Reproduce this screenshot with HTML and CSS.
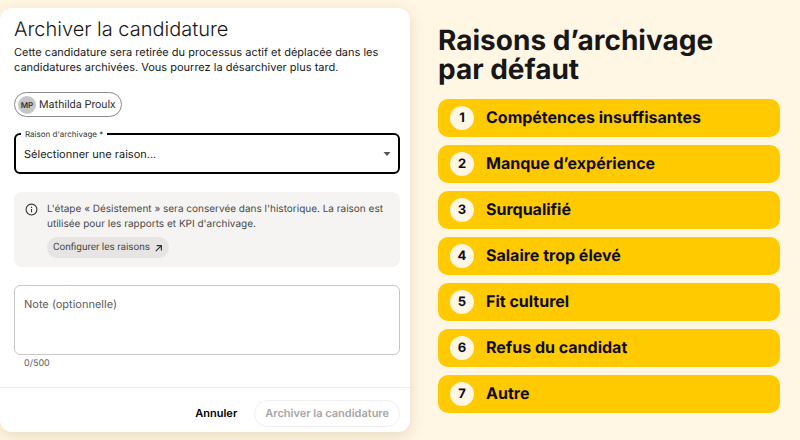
FILE: index.html
```html
<!DOCTYPE html>
<html lang="fr">
<head>
  <meta charset="utf-8">
  <title>Archiver la candidature</title>
  <link rel="stylesheet" href="styles.css">
</head>

<body>
  <main class="page">
    <form class="dialog">
      <div class="dialog-body">
        <h1 class="dialog-title">Archiver la candidature</h1>
        <p class="dialog-text">Cette candidature sera retirée du processus actif et déplacée dans les candidatures archivées. Vous pourrez la désarchiver plus tard.</p>

        <div class="chip">
          <span class="avatar">MP</span>
          <span>Mathilda Proulx</span>
        </div>

        <fieldset class="select-field">
          <legend><label for="reason">Raison d'archivage *</label></legend>
          <div class="select-wrap">
            <select id="reason" name="reason" required>
              <option value="">Sélectionner une raison...</option>
              <option>Compétences insuffisantes</option>
              <option>Manque d’expérience</option>
              <option>Surqualifié</option>
              <option>Salaire trop élevé</option>
              <option>Fit culturel</option>
              <option>Refus du candidat</option>
              <option>Autre</option>
            </select>
            <svg class="caret" viewBox="0 0 8 4" aria-hidden="true"><path d="M0.5 0h7L4 4z"/></svg>
          </div>
        </fieldset>

        <div class="notice">
          <svg class="info-icon" viewBox="0 0 24 24" aria-hidden="true">
            <circle cx="12" cy="12" r="10"/>
            <path d="M12 17v-6M12 7v2"/>
          </svg>
          <div>
            <p class="notice-text">L'étape « Désistement » sera conservée dans l'historique. La raison est utilisée pour les rapports et KPI d'archivage.</p>
            <a class="config-link" href="#">Configurer les raisons
              <svg class="arrow-icon" viewBox="0 0 10 10" aria-hidden="true"><path d="M2 2h6v6M8 2L1 9"/></svg>
            </a>
          </div>
        </div>

        <textarea class="note" name="note" maxlength="500" placeholder="Note (optionnelle)" aria-label="Note (optionnelle)"></textarea>
        <p class="counter">0/500</p>
      </div>

      <div class="dialog-actions">
        <button class="btn btn-cancel" type="button">Annuler</button>
        <button class="btn btn-archive" type="submit" disabled>Archiver la candidature</button>
      </div>
    </form>

    <section class="reasons">
      <h2 class="reasons-title">Raisons d’archivage<br>par défaut</h2>
      <ol class="reason-list">
        <li class="reason"><span class="number">1</span><span class="reason-name">Compétences insuffisantes</span></li>
        <li class="reason"><span class="number">2</span><span class="reason-name">Manque d’expérience</span></li>
        <li class="reason"><span class="number">3</span><span class="reason-name">Surqualifié</span></li>
        <li class="reason"><span class="number">4</span><span class="reason-name">Salaire trop élevé</span></li>
        <li class="reason"><span class="number">5</span><span class="reason-name">Fit culturel</span></li>
        <li class="reason"><span class="number">6</span><span class="reason-name">Refus du candidat</span></li>
        <li class="reason"><span class="number">7</span><span class="reason-name">Autre</span></li>
      </ol>
    </section>
  </main>
</body>

</html>
```
FILE: styles.css
```css
:root {
  --cream: #fff6e4;
  --yellow: #ffca00;
  --ink: #171717;
  --grey: #4a4a4a;
}

* {
  box-sizing: border-box;
}

body {
  margin: 0;
  background: var(--cream);
  color: var(--ink);
  font-family: Inter, "Liberation Sans", sans-serif;
  font-size: 11px;
  line-height: 15px;
  text-rendering: geometricPrecision;
}

h1,
h2,
p,
ol {
  margin: 0;
  padding: 0;
}

.page {
  display: grid;
  grid-template-columns: 41fr 39fr;
  align-items: start;
  padding: 8px 0;
}

/* Dialog */
.dialog {
  background: white;
  border-radius: 12px;
  box-shadow: 0 4px 16px rgba(110, 80, 0, 0.16);
}

.dialog-body {
  padding: 8px 10px 16px 14px;
}

.dialog-title {
  font-size: 20px;
  line-height: 26px;
  font-weight: 300;
  margin-bottom: 3px;
}

.dialog-text {
  margin-bottom: 17px;
}

.chip {
  display: inline-flex;
  align-items: center;
  gap: 3px;
  height: 25px;
  padding: 0 5px 0 3px;
  border: 1px solid #8a8a8a;
  border-radius: 13px;
  color: #333;
  font-family: Roboto, sans-serif;
}

.avatar {
  width: 18px;
  height: 18px;
  border-radius: 50%;
  background: #c6c6c6;
  font-family: Inter, sans-serif;
  font-size: 8px;
  line-height: 18px;
  font-weight: 600;
  text-align: center;
}

.select-field {
  margin: 12px 0 18px;
  padding: 0;
  border: 2px solid black;
  border-radius: 6px;
}

.select-field legend {
  margin-left: 5px;
  padding: 0 4px;
  font-size: 8px;
  line-height: 10px;
  color: #333;
}

.select-wrap {
  display: grid;
  align-items: center;
}

.select-wrap select,
.caret {
  grid-area: 1 / 1;
}

.select-wrap select {
  appearance: none;
  width: 100%;
  height: 33px;
  padding: 0 24px 3px 8px;
  border: none;
  outline: none;
  background: transparent;
  color: var(--ink);
  font: inherit;
  text-rendering: inherit;
}

.caret {
  justify-self: end;
  width: 8px;
  height: 4px;
  margin: 0 7px 3px 0;
  fill: #555;
  pointer-events: none;
}

.notice {
  display: flex;
  gap: 9px;
  padding: 10px 11px 9px;
  border-radius: 8px;
  background: #f5f4f3;
  color: var(--grey);
  font-size: 10px;
}

.info-icon {
  flex: none;
  width: 13px;
  height: 13px;
  margin-top: 1px;
  fill: none;
  stroke: #333;
  stroke-width: 2;
}

.notice-text {
  margin-bottom: 5px;
}

.config-link {
  display: inline-flex;
  align-items: center;
  gap: 5px;
  height: 21px;
  padding: 0 6px;
  border-radius: 11px;
  background: #e6e5e4;
  color: var(--grey);
  font-family: Roboto, sans-serif;
  text-decoration: none;
}

.arrow-icon {
  width: 8px;
  height: 8px;
  fill: none;
  stroke: #333;
  stroke-width: 1.5;
}

.note {
  display: block;
  width: 100%;
  height: 70px;
  margin-top: 18px;
  padding: 11px 9px;
  border: 1px solid #c8c8c8;
  border-radius: 6px;
  font: inherit;
  text-rendering: inherit;
  resize: none;
}

.note::placeholder {
  color: #5c5c5c;
}

.counter {
  padding: 1px 10px 0;
  font-size: 9px;
  color: #5c5c5c;
}

.dialog-actions {
  display: flex;
  justify-content: flex-end;
  gap: 6px;
  padding: 12px 10px 5px;
  border-top: 1px solid #ececec;
}

.btn {
  height: 27px;
  padding: 0 10px;
  border: 1px solid transparent;
  border-radius: 14px;
  background: transparent;
  font: inherit;
  font-weight: 600;
  text-rendering: inherit;
}

.btn-cancel {
  color: black;
}

.btn-archive {
  border-color: #efefef;
  color: #a6a6a6;
}

/* Default reasons */
.reasons {
  padding: 18px 20px 0 28px;
}

.reasons-title {
  font-size: 28px;
  line-height: 29px;
  font-weight: 700;
  margin-bottom: 15px;
}

.reason-list {
  display: grid;
  gap: 8px;
  list-style: none;
}

.reason {
  display: flex;
  align-items: center;
  gap: 12px;
  height: 38px;
  padding: 0 12px;
  border-radius: 10px;
  background: var(--yellow);
  color: #0c0c1c;
  font-size: 16px;
  font-weight: 700;
}

.reason-name {
  padding-bottom: 2px;
}

.number {
  width: 24px;
  height: 24px;
  border-radius: 50%;
  background: var(--cream);
  font-size: 13px;
  line-height: 24px;
  text-align: center;
}
```
